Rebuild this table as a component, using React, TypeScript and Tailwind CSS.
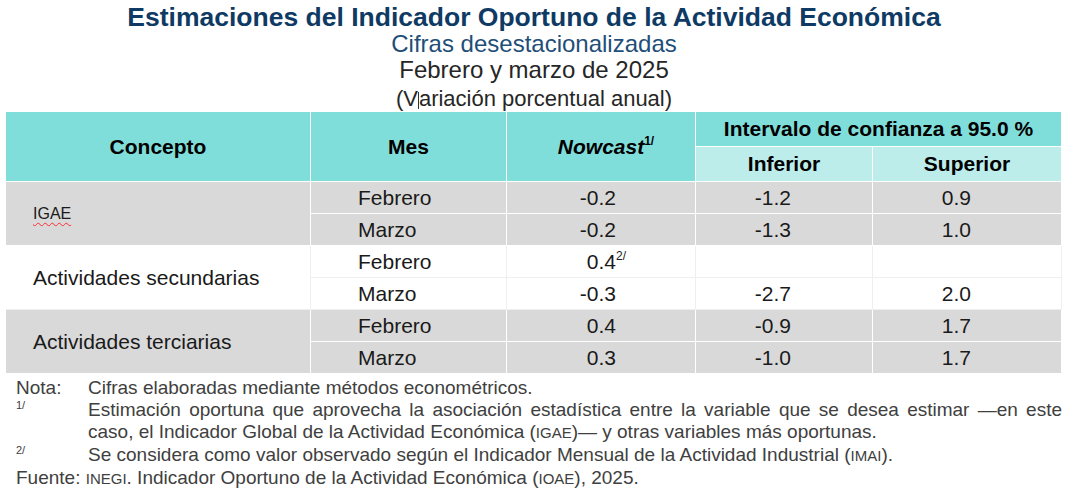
import React from 'react';

type Fila = { mes: string; nowcast: string; nota?: string; inf: string; sup: string };
type Grupo = { concepto: string; sigla?: boolean; gris: boolean; filas: Fila[] };

const grupos: Grupo[] = [
  {
    concepto: 'IGAE',
    sigla: true,
    gris: true,
    filas: [
      { mes: 'Febrero', nowcast: '-0.2', inf: '-1.2', sup: '0.9' },
      { mes: 'Marzo', nowcast: '-0.2', inf: '-1.3', sup: '1.0' },
    ],
  },
  {
    concepto: 'Actividades secundarias',
    gris: false,
    filas: [
      { mes: 'Febrero', nowcast: '0.4', nota: '2/', inf: '', sup: '' },
      { mes: 'Marzo', nowcast: '-0.3', inf: '-2.7', sup: '2.0' },
    ],
  },
  {
    concepto: 'Actividades terciarias',
    gris: true,
    filas: [
      { mes: 'Febrero', nowcast: '0.4', inf: '-0.9', sup: '1.7' },
      { mes: 'Marzo', nowcast: '0.3', inf: '-1.0', sup: '1.7' },
    ],
  },
];

const Sigla: React.FC<{ children: React.ReactNode }> = ({ children }) => (
  <span className="text-[15px]">{children}</span>
);

export default function App() {
  return (
    <div className="w-[1068px] h-[496px] bg-white overflow-hidden font-['Liberation_Sans',Arial,sans-serif]">
      {/* Encabezado */}
      <div className="flex flex-col items-center pt-[3px]">
        <h1 className="text-[26.5px] leading-[28px] font-bold text-[#0e3a64]">
          Estimaciones del Indicador Oportuno de la Actividad Económica
        </h1>
        <p className="text-[24px] leading-[26px] text-[#1f4e79]">Cifras desestacionalizadas</p>
        <p className="text-[24px] leading-[26px] text-[#262626]">Febrero y marzo de 2025</p>
        <p className="pt-[2px] text-[22px] leading-[27px] text-[#262626]">
          (V
          <span className="inline-block w-px h-[17px] bg-[#333] align-[-3px]" />
          ariación porcentual anual)
        </p>
      </div>

      {/* Tabla */}
      <div className="ml-[6px] grid grid-cols-[305px_196px_189px_177px_189px] grid-rows-[35px_35px_repeat(6,32px)] text-[21px] text-[#1a1a1a]">
        <div className="row-span-2 flex items-center justify-center bg-[#80deda] border-r border-b border-white font-bold text-black">
          Concepto
        </div>
        <div className="row-span-2 flex items-center justify-center bg-[#80deda] border-r border-b border-white font-bold text-black">
          Mes
        </div>
        <div className="row-span-2 flex items-center justify-center bg-[#80deda] border-r border-b border-white font-bold italic text-black">
          <span className="relative">
            Nowcast
            <span className="absolute left-full top-[4px] text-[12px] not-italic leading-none">1/</span>
          </span>
        </div>
        <div className="col-span-2 flex items-center justify-center bg-[#80deda] border-r border-b border-white font-bold text-black">
          Intervalo de confianza a 95.0 %
        </div>
        <div className="flex items-center justify-center bg-[#bdedea] border-r border-b border-white font-bold text-black">
          Inferior
        </div>
        <div className="flex items-center justify-center bg-[#bdedea] border-r border-b border-white font-bold text-black">
          Superior
        </div>

        {grupos.map((g) => {
          const fondo = g.gris ? 'bg-[#d9d9d9] border-white' : 'bg-white border-[#efefef]';
          return (
            <React.Fragment key={g.concepto}>
              <div className={`row-span-2 flex items-center pl-[27px] border-r border-b ${fondo}`}>
                {g.sigla ? (
                  <span className="text-[16px] underline decoration-wavy decoration-red-500 decoration-1 underline-offset-[3px]">
                    {g.concepto}
                  </span>
                ) : (
                  g.concepto
                )}
              </div>
              {g.filas.map((f, i) => (
                <React.Fragment key={i}>
                  <div className={`flex items-center pl-[47px] border-r border-b ${fondo}`}>{f.mes}</div>
                  <div className={`flex items-center justify-end pr-[79px] border-r border-b ${fondo}`}>
                    <span className="relative">
                      {f.nowcast}
                      {f.nota && (
                        <span className="absolute left-full top-[4px] text-[12px] leading-none">{f.nota}</span>
                      )}
                    </span>
                  </div>
                  <div className={`flex items-center justify-end pr-[81px] border-r border-b ${fondo}`}>{f.inf}</div>
                  <div className={`flex items-center justify-end pr-[90px] border-r border-b ${fondo}`}>{f.sup}</div>
                </React.Fragment>
              ))}
            </React.Fragment>
          );
        })}
      </div>

      {/* Notas */}
      <div className="mt-[3px] ml-[16px] w-[1046px] grid grid-cols-[72px_974px] text-[19px] leading-[22px] text-[#404040]">
        <div>Nota:</div>
        <div>Cifras elaboradas mediante métodos econométricos.</div>

        <div className="text-[11px] leading-none pt-[1px]">1/</div>
        <div>
          <div className="text-justify [text-align-last:justify]">
            Estimación oportuna que aprovecha la asociación estadística entre la variable que se desea estimar —en este
          </div>
          <div>
            caso, el Indicador Global de la Actividad Económica (<Sigla>IGAE</Sigla>)— y otras variables más oportunas.
          </div>
        </div>

        <div className="text-[11px] leading-none pt-[1px]">2/</div>
        <div>
          Se considera como valor observado según el Indicador Mensual de la Actividad Industrial (<Sigla>IMAI</Sigla>).
        </div>

        <div className="col-span-2">
          Fuente: <Sigla>INEGI</Sigla>. Indicador Oportuno de la Actividad Económica (<Sigla>IOAE</Sigla>), 2025.
        </div>
      </div>
    </div>
  );
}
